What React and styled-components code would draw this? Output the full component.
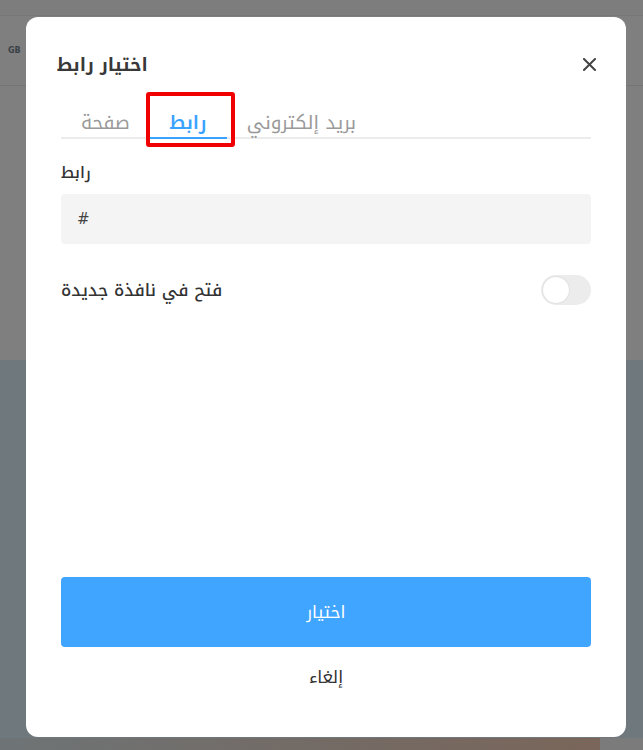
import React, { useState } from "react";
import styled, { createGlobalStyle } from "styled-components";

const ARABIC = `"Noto Kufi Arabic", "Noto Sans", sans-serif`;

const Global = createGlobalStyle`
  html, body { margin: 0; padding: 0; }
  body {
    width: 643px;
    height: 750px;
    overflow: hidden;
    font-family: ${ARABIC};
  }
`;

const Page = styled.div`
  position: relative;
  width: 643px;
  height: 750px;
  display: flex;
  flex-direction: column;
  background: #7f7f7f;
`;

const TopStrip = styled.div`
  height: 15px;
  border-bottom: 1px solid #777;
  background: #7d7d7d;
`;

const HeaderBar = styled.div`
  height: 69px;
  border-bottom: 1px solid #757575;
  display: flex;
  align-items: center;
  padding-left: 8px;
  font-family: "DejaVu Sans", sans-serif;
  font-size: 8px;
  font-weight: bold;
  color: #3a3f48;
`;

const GraySection = styled.div`
  height: 274px;
  background: #7f7f7f;
`;

const BlueSection = styled.div`
  flex: 1;
  background: #6f787d;
`;

const Footer = styled.div`
  height: 12px;
  display: flex;
`;

const FooterImage = styled.div`
  flex: 1;
  background: linear-gradient(90deg, #6e7476 0%, #736b66 50%, #7a665a 100%);
`;

const FooterRest = styled.div`
  width: 43px;
  background: #7b7b7b;
`;

const Overlay = styled.div`
  position: absolute;
  inset: 0;
  display: flex;
  justify-content: flex-start;
  padding: 17px 0 0 26px;
  box-sizing: border-box;
`;

const Modal = styled.div`
  width: 600px;
  height: 720px;
  background: #fff;
  border-radius: 12px;
  box-sizing: border-box;
  padding: 0 35px;
  display: flex;
  flex-direction: column;
  color: #333;
`;

const ModalHeader = styled.div`
  height: 95px;
  display: flex;
  align-items: center;
  justify-content: space-between;
`;

const Title = styled.h2`
  margin: 0 0 0 -4px;
  font-size: 18px;
  line-height: 28px;
  font-weight: bold;
  color: #383838;
`;

const CloseButton = styled.button`
  border: 0;
  background: none;
  padding: 0;
  width: 14px;
  height: 14px;
  display: flex;
  align-items: center;
  justify-content: center;
  cursor: pointer;
  margin-right: -5px;
`;

const TabList = styled.div`
  display: flex;
  align-items: flex-end;
  border-bottom: 2px solid #ececec;
  height: 25px;
`;

const Tab = styled.div`
  position: relative;
  height: 27px;
  margin-bottom: -2px;
  padding: 0 20px;
  box-sizing: border-box;
  display: flex;
  align-items: flex-start;
  justify-content: center;
  font-size: 19px;
  line-height: 22px;
  white-space: nowrap;
  color: ${(p) => (p.$active ? "#3aa2ff" : "#9a9a9a")};
  font-weight: ${(p) => (p.$active ? 600 : "normal")};
  border-bottom: 2px solid ${(p) => (p.$active ? "#3aa2ff" : "transparent")};
`;

const Highlight = styled.div`
  position: absolute;
  left: -4px;
  top: -20px;
  width: 89px;
  height: 55px;
  border: 4px solid #f00000;
  border-radius: 3px;
  box-sizing: border-box;
  pointer-events: none;
`;

const FieldLabel = styled.div`
  margin-top: 22px;
  font-size: 16px;
  font-weight: 500;
  color: #333;
  height: 24px;
  line-height: 24px;
`;

const Input = styled.input`
  margin-top: 9px;
  height: 50px;
  width: 100%;
  box-sizing: border-box;
  border: 0;
  border-radius: 4px;
  background: #f4f4f4;
  padding: 0 16px;
  font-family: "DejaVu Sans", sans-serif;
  font-size: 15px;
  color: #444;
  outline: none;
`;

const ToggleRow = styled.div`
  margin-top: 31px;
  display: flex;
  align-items: center;
  justify-content: space-between;
  height: 30px;
`;

const ToggleLabel = styled.span`
  font-size: 17px;
  line-height: 24px;
  font-weight: 500;
  color: #333;
`;

const Switch = styled.button`
  width: 50px;
  height: 30px;
  border-radius: 15px;
  border: 0;
  padding: 0;
  background: #ececec;
  position: relative;
  cursor: pointer;
`;

const Knob = styled.span`
  position: absolute;
  top: 2px;
  left: 2px;
  width: 26px;
  height: 26px;
  border-radius: 50%;
  background: #fff;
  box-shadow: 0 0 2px rgba(0, 0, 0, 0.15);
`;

const Spacer = styled.div`
  flex: 1;
`;

const PrimaryButton = styled.button`
  height: 70px;
  width: 100%;
  border: 0;
  border-radius: 4px;
  background: #3fa5ff;
  color: #fff;
  font-family: ${ARABIC};
  font-size: 17px;
  cursor: pointer;
`;

const CancelButton = styled.button`
  margin-top: 12px;
  margin-bottom: 42px;
  height: 36px;
  border: 0;
  background: none;
  color: #333;
  font-family: ${ARABIC};
  font-size: 17px;
  cursor: pointer;
`;

export default function App() {
  const [on, setOn] = useState(false);
  return (
    <>
      <Global />
      <Page>
        <TopStrip />
        <HeaderBar>GB</HeaderBar>
        <GraySection />
        <BlueSection />
        <Footer>
          <FooterImage />
          <FooterRest />
        </Footer>
        <Overlay>
          <Modal>
            <ModalHeader>
              <Title>اختيار رابط</Title>
              <CloseButton aria-label="close">
                <svg width="13" height="13" viewBox="0 0 13 13">
                  <path d="M1 1 L12 12 M12 1 L1 12" stroke="#444" strokeWidth="2" strokeLinecap="square" />
                </svg>
              </CloseButton>
            </ModalHeader>
            <TabList>
              <Tab>صفحة</Tab>
              <Tab $active>
                رابط
                <Highlight />
              </Tab>
              <Tab>بريد إلكتروني</Tab>
            </TabList>
            <FieldLabel>رابط</FieldLabel>
            <Input defaultValue="#" />
            <ToggleRow>
              <ToggleLabel>فتح في نافذة جديدة</ToggleLabel>
              <Switch onClick={() => setOn(!on)} aria-label="toggle">
                <Knob />
              </Switch>
            </ToggleRow>
            <Spacer />
            <PrimaryButton>اختيار</PrimaryButton>
            <CancelButton>إلغاء</CancelButton>
          </Modal>
        </Overlay>
      </Page>
    </>
  );
}
